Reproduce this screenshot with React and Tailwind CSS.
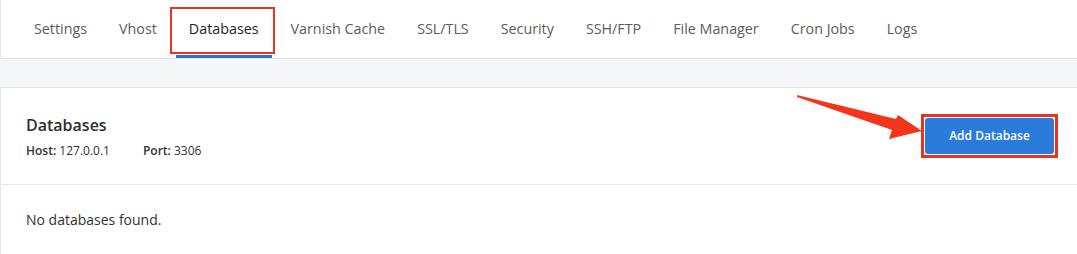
import React from "react";

const tabs = [
    "Settings",
    "Vhost",
    "Databases",
    "Varnish Cache",
    "SSL/TLS",
    "Security",
    "SSH/FTP",
    "File Manager",
    "Cron Jobs",
    "Logs",
];

const App = () => {
    const active = "Databases";

    return (
        <div
            className="relative w-full h-[254px] overflow-hidden bg-[#f5f6f8]"
            style={{ fontFamily: '"Open Sans", "Noto Sans", sans-serif' }}
        >
            {/* tab bar */}
            <div className="h-[59px] bg-white border-l border-b border-[#e3e5e8] flex items-stretch pl-[17px]">
                {tabs.map((tab) => (
                    <div
                        key={tab}
                        className={`relative px-4 flex items-center text-[14.3px] ${
                            tab === active ? "text-[#1e1e1e]" : "text-[#5c5c5c]"
                        }`}
                    >
                        {tab}
                        {tab === active && (
                            <>
                                <span className="absolute left-[3px] right-[3px] bottom-0 h-[3px] bg-[#2c6fc4]" />
                                {/* annotation box */}
                                <span className="absolute left-[-3px] right-0 top-[7px] bottom-[4px] border-2 border-[#e8341c]" />
                            </>
                        )}
                    </div>
                ))}
            </div>

            {/* card */}
            <div className="mt-[28px] bg-white border-t border-l border-[#e3e5e8]">
                <div className="h-[97px] border-b border-[#e3e5e8] flex items-center justify-between pl-[25px] pr-[19px]">
                    <div className="flex flex-col">
                        <h2 className="text-[16px] font-semibold text-[#2e2e33] leading-[22px]">
                            Databases
                        </h2>
                        <div className="flex gap-[33px] text-[12px] text-[#333] mt-[7px] leading-[16px]">
                            <span>
                                <span className="font-semibold">Host:</span> 127.0.0.1
                            </span>
                            <span>
                                <span className="font-semibold">Port:</span> 3306
                            </span>
                        </div>
                    </div>
                    <div className="border-[3px] border-[#e8341c] p-px bg-white">
                        <button className="w-[129px] h-[36px] rounded-[3px] bg-[#2b7bdb] text-white text-[12px] font-semibold">
                            Add Database
                        </button>
                    </div>
                </div>
                <div className="h-[70px] flex items-center pl-[25px] pb-[2px] text-[14px] text-[#333]">
                    No databases found.
                </div>
            </div>

            {/* annotation arrow */}
            <svg
                className="absolute left-0 top-0 pointer-events-none"
                width="1077"
                height="254"
            >
                <polygon
                    points="797,95 896,119 898,115 922,131 889,139 892,130 797,97"
                    fill="#f5341c"
                />
            </svg>
        </div>
    );
};

export default App;
